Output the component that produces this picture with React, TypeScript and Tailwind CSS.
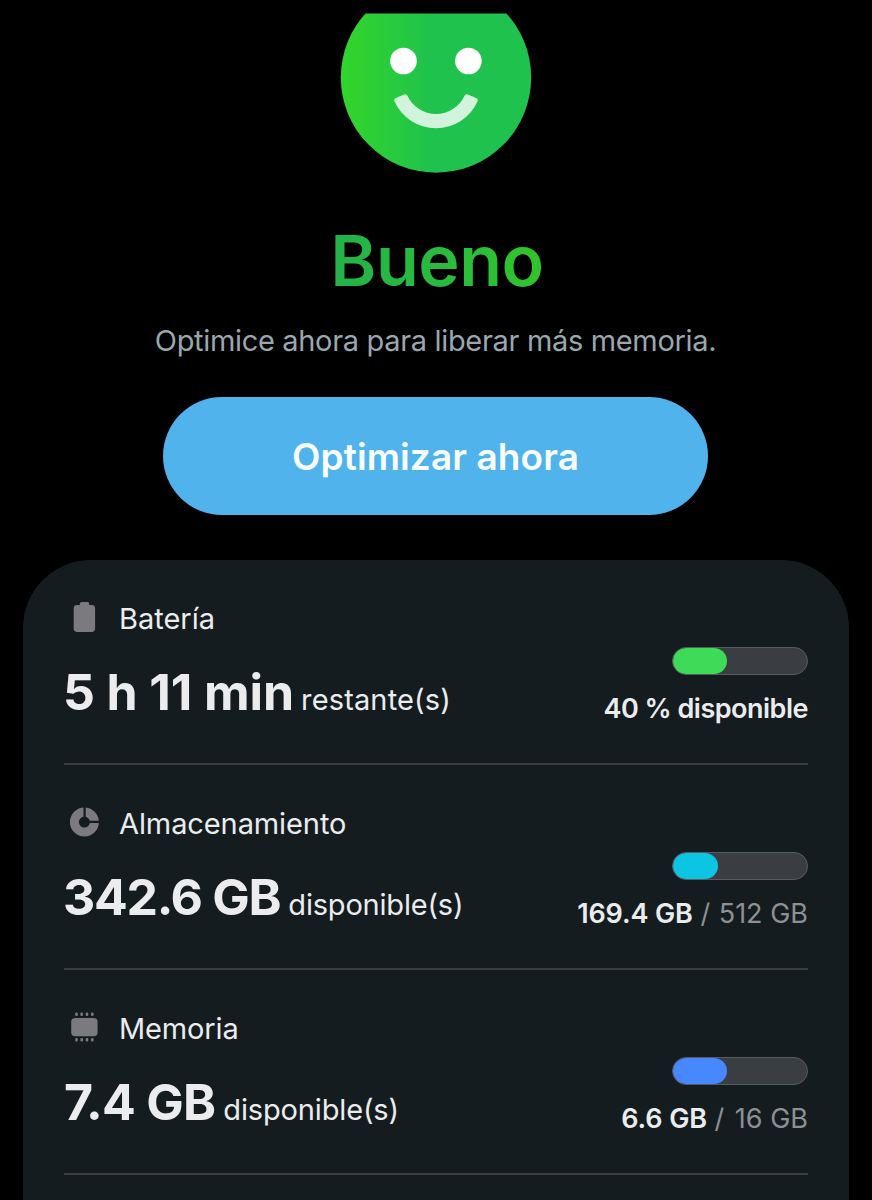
import type { ReactNode } from 'react';

function SmileyFace() {
  return (
    <svg width="192" height="160" viewBox="340 13 192 160" className="block shrink-0">
      <defs>
        <linearGradient id="face" x1="341" x2="531" y1="0" y2="0" gradientUnits="userSpaceOnUse">
          <stop offset="0" stopColor="#31d52b" />
          <stop offset="0.1" stopColor="#2fd230" />
          <stop offset="0.48" stopColor="#1fc24d" />
          <stop offset="1" stopColor="#1fc24d" />
        </linearGradient>
        <clipPath id="crop">
          <rect x="340" y="13.6" width="192" height="160" />
        </clipPath>
      </defs>
      <circle cx="436" cy="77.5" r="95.2" fill="url(#face)" clipPath="url(#crop)" />
      <circle cx="403.5" cy="61" r="13.3" fill="#fff" />
      <circle cx="468.4" cy="61" r="13.3" fill="#fff" />
      <path
        d="M396.8 100.4L405.2 96.8A33.9 33.9 0 0 0 466.8 96.8L475.2 100.4A43 43 0 0 1 396.8 100.4Z"
        fill="#d2f3dc"
        stroke="#d2f3dc"
        strokeWidth="5"
        strokeLinejoin="round"
      />
    </svg>
  );
}

function BatteryIcon() {
  return (
    <svg width="40" height="40" viewBox="0 0 40 40" fill="#7b7a7e">
      <rect x="9.7" y="7" width="21.4" height="27" rx="3.4" />
      <rect x="15.8" y="4" width="9.4" height="6" rx="1.8" />
    </svg>
  );
}

function StorageIcon() {
  return (
    <svg width="40" height="40" viewBox="0 0 40 40">
      <circle cx="20.4" cy="19.1" r="10" fill="none" stroke="#7b7a7e" strokeWidth="9" />
      <path d="M20.6 3V17M22 18.9H36" stroke="#151c1f" strokeWidth="2.2" />
    </svg>
  );
}

function MemoryIcon() {
  return (
    <svg width="40" height="40" viewBox="0 0 40 40" fill="#7b7a7e">
      <rect x="7.2" y="10" width="26.4" height="18.2" rx="4" />
      {[11.2, 16.4, 21.7, 27].map((x) => (
        <g key={x}>
          <rect x={x} y="4.4" width="2.6" height="3.7" rx="1.1" />
          <rect x={x} y="29.9" width="2.6" height="3.7" rx="1.1" />
        </g>
      ))}
    </svg>
  );
}

type RowProps = {
  icon: ReactNode;
  label: ReactNode;
  value: ReactNode;
  unit: ReactNode;
  bar: string;
  detail: ReactNode;
};

function StatRow({ icon, label, value, unit, bar, detail }: RowProps) {
  return (
    <section className="flex h-[205px] justify-between border-b-2 border-[#393e41]">
      <div className="pt-[38px] text-[#ebecee]">
        <div className="flex h-10 items-start text-[29px] leading-[42px]">
          <span className="mr-[15px] shrink-0">{icon}</span>
          {label}
        </div>
        <div className="mt-6 flex items-baseline whitespace-nowrap leading-[60px]">
          <span className="text-[50px] font-bold">{value}</span>
          <span className="text-[29px]">{unit}</span>
        </div>
      </div>
      <div className="flex flex-col items-end pt-[87px]">
        <div className="h-7 w-[136px] overflow-hidden rounded-full border border-[#565b5f] bg-[#3a3e42]">
          <div className={`h-full rounded-full ${bar}`} />
        </div>
        <div className="mt-[14px] whitespace-nowrap text-[27px] leading-10 text-[#8d9094]">{detail}</div>
      </div>
    </section>
  );
}

export default function App() {
  return (
    <main className="flex h-[1200px] w-[872px] flex-col items-center overflow-hidden bg-black pt-[13px] font-['Inter',sans-serif]">
      <SmileyFace />
      <h1 className="ml-0.5 mt-12 bg-linear-to-r from-[#22b24a] to-[#30c529] bg-clip-text text-[70px] font-semibold leading-[80px] tracking-[-0.5px] text-transparent">
        Bueno
      </h1>
      <p className="mr-px mt-5 whitespace-nowrap text-[29px] leading-10 tracking-[-0.33px] text-[#9aa7af]">
        Optimice ahora para liberar más memoria.
      </p>
      <button className="mr-px mt-9 h-[118px] w-[545px] shrink-0 rounded-full bg-[#50b3eb] pt-0.5 text-[37px] font-semibold tracking-[0.1px] text-[#f8feff]">
        Optimizar ahora
      </button>
      <div className="mt-[45px] h-[680px] w-[826px] shrink-0 rounded-t-[68px] bg-[#151c1f] px-[41px]">
        <StatRow
          icon={<BatteryIcon />}
          label={<span>Batería</span>}
          value={<span className="-ml-px tracking-[-0.1px]">5 h 11 min</span>}
          unit={<span className="ml-[7px] tracking-[0.15px]">restante(s)</span>}
          bar="w-[54px] bg-[#3ddb57]"
          detail={<span className="font-semibold tracking-[-0.5px] text-[#ebecee]">40 % disponible</span>}
        />
        <StatRow
          icon={<StorageIcon />}
          label={<span className="tracking-[-0.1px]">Almacenamiento</span>}
          value={<span className="-ml-px tracking-[-1.3px]">342.6 GB</span>}
          unit={<span className="ml-2 tracking-[-0.2px]">disponible(s)</span>}
          bar="w-[45px] bg-[#0cc5e3]"
          detail={
            <>
              <span className="font-semibold tracking-[-0.12px] text-[#ebecee]">169.4 GB</span>
              <span className="mr-px"> /</span> 512 GB
            </>
          }
        />
        <StatRow
          icon={<MemoryIcon />}
          label={<span className="tracking-[-0.15px]">Memoria</span>}
          value={<span className="tracking-[-0.74px]">7.4 GB</span>}
          unit={<span className="ml-2 tracking-[-0.15px]">disponible(s)</span>}
          bar="w-[54px] bg-[#4787ff]"
          detail={
            <>
              <span className="font-semibold tracking-[-0.12px] text-[#ebecee]">6.6 GB</span>
              <span className="mr-[3px]"> /</span> 16 GB
            </>
          }
        />
      </div>
    </main>
  );
}
